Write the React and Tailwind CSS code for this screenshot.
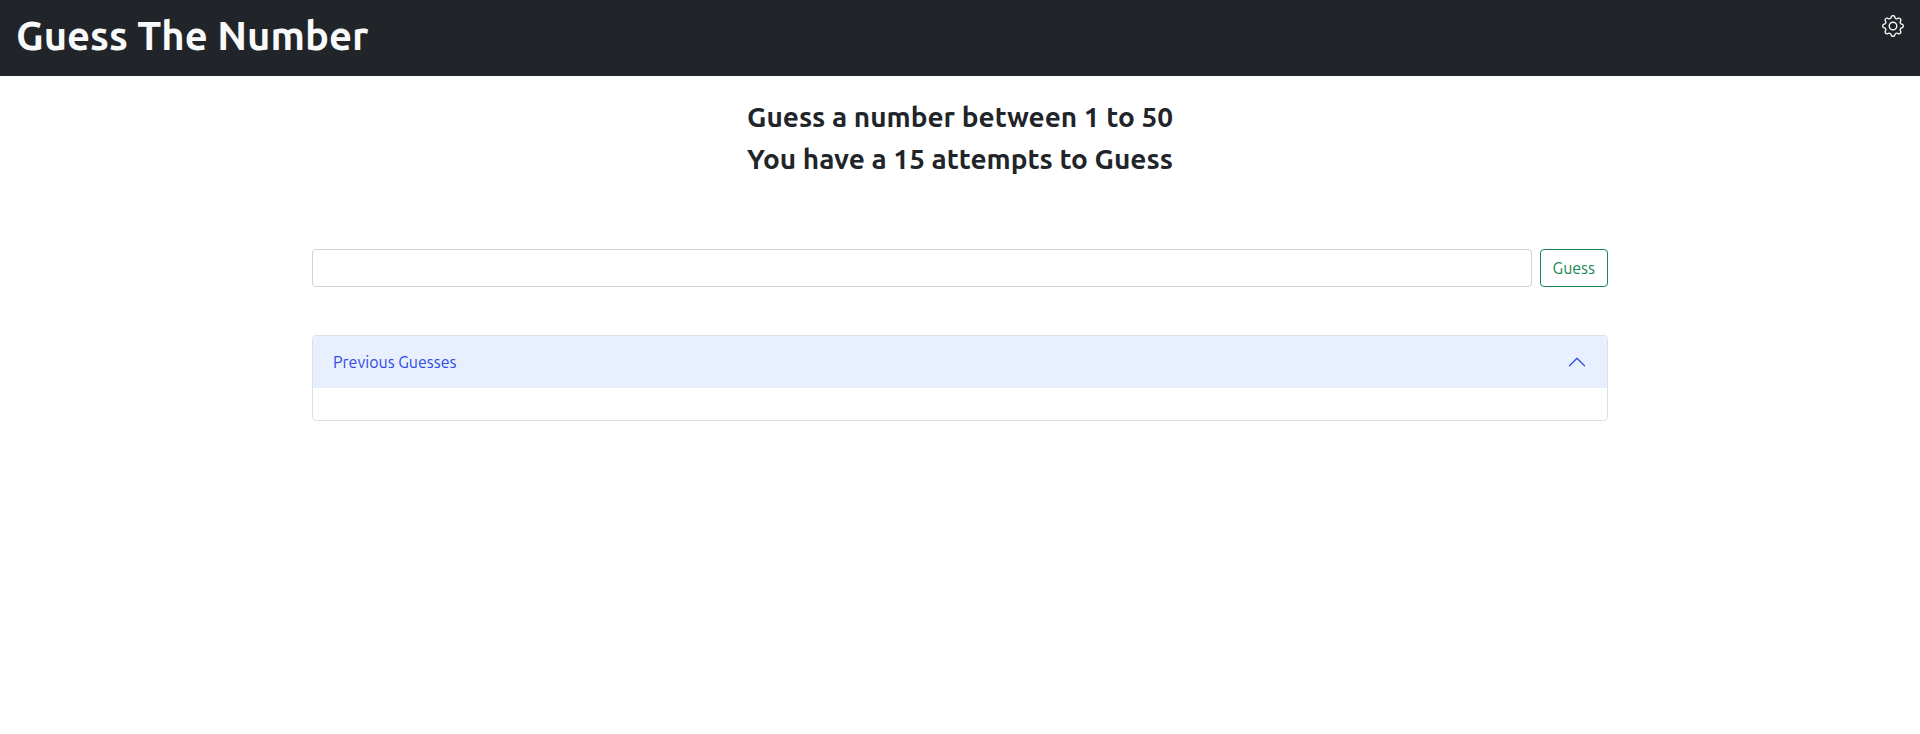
import { useState } from "react";
import { BsGear, BsChevronUp } from "react-icons/bs";

export default function App() {
  const [guess, setGuess] = useState("");
  const [open, setOpen] = useState(true);

  return (
    <div className="min-h-screen bg-white font-['Ubuntu','Noto_Sans',sans-serif] text-base text-[#212529]">
      <header className="flex items-start justify-between bg-[#212529] px-4 pt-3 pb-4 text-[#f8f9fa]">
        <h1 className="text-[40px] leading-[48px] font-semibold">Guess The Number</h1>
        <button type="button" aria-label="Settings" className="mt-[3px]">
          <BsGear className="size-[22px]" />
        </button>
      </header>
      <main className="mx-auto max-w-[1320px] px-3 pt-6">
        <div className="flex flex-col gap-2 text-center text-[28px] leading-[34px] font-semibold">
          <h2>Guess a number between 1 to 50</h2>
          <h2>You have a 15 attempts to Guess</h2>
        </div>
        <form className="mt-[73px] flex gap-2" onSubmit={(e) => e.preventDefault()}>
          <input
            type="text"
            aria-label="Your guess"
            value={guess}
            onChange={(e) => setGuess(e.target.value)}
            className="h-[38px] min-w-0 flex-1 rounded border border-[#ced4da] px-3"
          />
          <button
            type="submit"
            className="h-[38px] rounded border border-[#198754] px-3 text-base leading-6 text-[#198754]"
          >
            Guess
          </button>
        </form>
        <section className="mt-12 overflow-hidden rounded border border-[#dfdfdf]">
          <h2>
            <button
              type="button"
              aria-expanded={open}
              onClick={() => setOpen(!open)}
              className="flex h-[52px] w-full items-center justify-between bg-[#e8f0ff] px-5 text-base leading-6 text-[#2f4be3]"
            >
              Previous Guesses
              <BsChevronUp className="size-5" />
            </button>
          </h2>
          {open && <div className="h-8" />}
        </section>
      </main>
    </div>
  );
}
